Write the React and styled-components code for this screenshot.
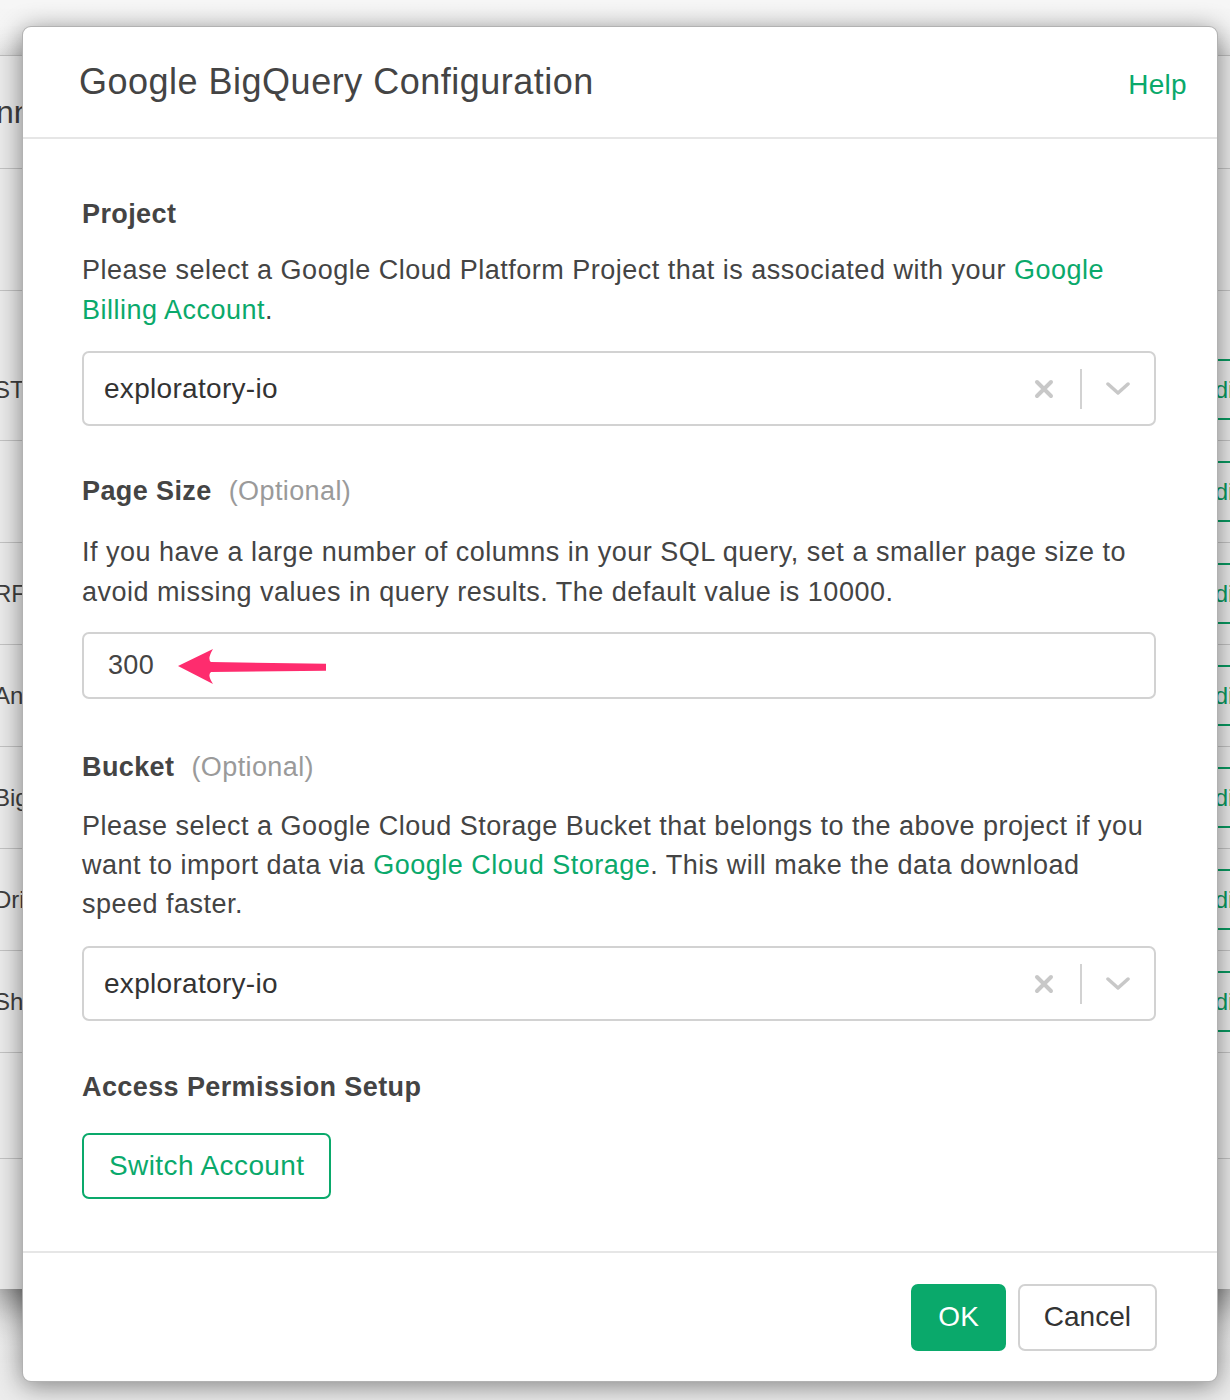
import styled, { createGlobalStyle } from "styled-components";

const GlobalStyle = createGlobalStyle`
  html, body {
    margin: 0;
    padding: 0;
  }
  body {
    background: #f4f4f4;
    font-family: "Liberation Sans", Arial, sans-serif;
    color: #444;
  }
`;

const GREEN = "#0aa96b";

// Stage
const Stage = styled.div`
  position: relative;
  width: 1230px;
  height: 1400px;
  overflow: hidden;
  background: linear-gradient(#f6f6f6, #ececec);
`;

// Window behind the modal
const BackWindow = styled.div`
  position: relative;
  margin-top: 55px;
  height: 1233px;
  background: #fff;
  border-top: 1px solid #bdbdbd;
  box-shadow: 0 14px 40px rgba(0, 0, 0, 0.65);
  overflow: hidden;
  display: flex;
  flex-direction: column;

  &::after {
    content: "";
    position: absolute;
    inset: 0;
    background: rgba(0, 0, 0, 0.08);
  }
`;

const BackRow = styled.div`
  flex: 0 0 ${(p) => p.$h}px;
  display: flex;
  align-items: center;
  border-bottom: ${(p) => (p.$line ? "1px solid #d4d4d4" : "none")};
  box-sizing: border-box;
`;

const BackLabel = styled.span`
  flex: 1;
  margin-left: ${(p) => (p.$big ? -4 : -6)}px;
  font-size: ${(p) => (p.$big ? 32 : 24)}px;
  color: #444;
  white-space: nowrap;
`;

const EditButton = styled.span`
  flex: 0 0 auto;
  margin-right: -32px;
  height: 57px;
  padding: 0 20px;
  display: flex;
  align-items: center;
  border: 2px solid ${GREEN};
  border-radius: 6px;
  color: ${GREEN};
  font-size: 24px;
`;

// Modal
const Modal = styled.div`
  position: absolute;
  left: 22px;
  top: 26px;
  width: 1196px;
  height: 1356px;
  box-sizing: border-box;
  background: #fff;
  border: 1px solid rgba(0, 0, 0, 0.3);
  border-radius: 9px;
  box-shadow: 0 4px 26px rgba(0, 0, 0, 0.45);
  display: flex;
  flex-direction: column;
`;

const Header = styled.div`
  height: 112px;
  flex: 0 0 112px;
  box-sizing: border-box;
  display: flex;
  align-items: center;
  justify-content: space-between;
  padding: 0 30px 0 56px;
  border-bottom: 2px solid #e6e6e6;
`;

const Title = styled.h1`
  margin: 0;
  font-size: 36px;
  letter-spacing: 0.5px;
  font-weight: normal;
  color: #444;
`;

const HelpLink = styled.a`
  font-size: 28px;
  letter-spacing: 0.3px;
  color: ${GREEN};
  text-decoration: none;
  margin-top: 6px;
`;

const Body = styled.div`
  flex: 1;
  padding: 55px 61px 0 59px;
  border-bottom: 2px solid #e6e6e6;
`;

const Section = styled.div`
  margin-bottom: ${(p) => p.$gap || 0}px;
`;

const Label = styled.div`
  font-size: 27px;
  letter-spacing: 0.4px;
  line-height: 40px;
  font-weight: bold;
  color: #444;
  margin-bottom: ${(p) => p.$mb}px;
`;

const Optional = styled.span`
  font-weight: normal;
  color: #9a9a9a;
  margin-left: 17px;
`;

const Desc = styled.p`
  margin: 0 0 ${(p) => p.$mb}px;
  font-size: 27px;
  letter-spacing: 0.5px;
  line-height: ${(p) => p.$lh || 40}px;
  color: #444;
`;

const Link = styled.a`
  color: ${GREEN};
  text-decoration: none;
`;

const SelectBox = styled.div`
  height: 75px;
  box-sizing: border-box;
  border: 2px solid #d2d2d2;
  border-radius: 7px;
  display: flex;
  align-items: center;
  padding-left: 20px;
`;

const SelectValue = styled.span`
  flex: 1;
  font-size: 28px;
  letter-spacing: 0.3px;
  color: #333;
`;

const ClearIcon = styled.span`
  width: 72px;
  display: flex;
  justify-content: center;
`;

const Separator = styled.span`
  width: 2px;
  height: 40px;
  background: #d2d2d2;
`;

const ChevronIcon = styled.span`
  width: 72px;
  display: flex;
  justify-content: center;
`;

const InputWrap = styled.div`
  position: relative;
`;

const TextInput = styled.div`
  height: 67px;
  box-sizing: border-box;
  border: 2px solid #d2d2d2;
  border-radius: 7px;
  display: flex;
  align-items: center;
  padding-left: 24px;
  font-size: 27px;
  letter-spacing: 0.3px;
  color: #444;
`;

const Arrow = styled.svg`
  position: absolute;
  left: 94px;
  top: 14px;
`;

const OutlineButton = styled.button`
  height: 66px;
  box-sizing: border-box;
  padding: 0 25px;
  border: 2px solid ${GREEN};
  border-radius: 7px;
  background: #fff;
  color: ${GREEN};
  font-family: inherit;
  font-size: 28px;
  letter-spacing: 0.4px;
`;

const Footer = styled.div`
  flex: 0 0 128px;
  box-sizing: border-box;
  display: flex;
  align-items: center;
  justify-content: flex-end;
  gap: 12px;
  padding: 0 60px 0 0;
`;

const FooterButton = styled.button`
  height: 67px;
  box-sizing: border-box;
  padding: 0 ${(p) => (p.$primary ? 25 : 24)}px;
  border-radius: 7px;
  border: 2px solid ${(p) => (p.$primary ? GREEN : "#d2d2d2")};
  background: ${(p) => (p.$primary ? GREEN : "#fff")};
  color: ${(p) => (p.$primary ? "#fff" : "#333")};
  font-family: inherit;
  font-size: 28px;
`;

const Select = ({ value }) => (
  <SelectBox>
    <SelectValue>{value}</SelectValue>
    <ClearIcon>
      <svg width="20" height="20" viewBox="0 0 20 20">
        <path d="M3 3 L17 17 M17 3 L3 17" stroke="#c8c8c8" strokeWidth="4" strokeLinecap="round" />
      </svg>
    </ClearIcon>
    <Separator />
    <ChevronIcon>
      <svg width="24" height="14" viewBox="0 0 24 14">
        <path d="M2 2 L12 11 L22 2" stroke="#c8c8c8" strokeWidth="3.5" fill="none" strokeLinecap="round" strokeLinejoin="round" />
      </svg>
    </ChevronIcon>
  </SelectBox>
);

const backRows = [
  { h: 113, label: "nnections", big: true, line: true },
  { h: 122, line: true },
  { h: 48 },
  { h: 102, label: "STAGING", edit: true, line: true },
  { h: 102, edit: true, line: true },
  { h: 102, label: "RFM", edit: true, line: true },
  { h: 102, label: "Analytics", edit: true, line: true },
  { h: 102, label: "BigQuery", edit: true, line: true },
  { h: 102, label: "Drive", edit: true, line: true },
  { h: 102, label: "Sheets", edit: true, line: true },
  { h: 106, line: true },
  { h: 130 },
];

const App = () => {
  return (
    <Stage>
      <GlobalStyle />
      <BackWindow>
        {backRows.map((r, i) => (
          <BackRow key={i} $h={r.h} $line={r.line}>
            <BackLabel $big={r.big}>{r.label}</BackLabel>
            {r.edit && <EditButton>Edit</EditButton>}
          </BackRow>
        ))}
      </BackWindow>

      <Modal>
        <Header>
          <Title>Google BigQuery Configuration</Title>
          <HelpLink>Help</HelpLink>
        </Header>

        <Body>
          <Section $gap={45}>
            <Label $mb={16}>Project</Label>
            <Desc $mb={21}>
              Please select a Google Cloud Platform Project that is associated with your{" "}
              <Link>Google Billing Account</Link>.
            </Desc>
            <Select value="exploratory-io" />
          </Section>

          <Section $gap={48}>
            <Label $mb={21}>
              Page Size<Optional>(Optional)</Optional>
            </Label>
            <Desc $mb={20}>
              If you have a large number of columns in your SQL query, set a smaller page size to
              avoid missing values in query results. The default value is 10000.
            </Desc>
            <InputWrap>
              <TextInput>300</TextInput>
              <Arrow width="150" height="40" viewBox="0 0 150 40">
                <path
                  d="M2 20 L37 3 Q31 13 35 16 L226 19 Q229 21 226 24 L35 26 Q31 29 37 38 Z"
                  fill="#fe2c6e"
                />
              </Arrow>
            </InputWrap>
          </Section>

          <Section $gap={46}>
            <Label $mb={20}>
              Bucket<Optional>(Optional)</Optional>
            </Label>
            <Desc $mb={22} $lh={39}>
              Please select a Google Cloud Storage Bucket that belongs to the above project if you
              want to import data via <Link>Google Cloud Storage</Link>. This will make the data
              download speed faster.
            </Desc>
            <Select value="exploratory-io" />
          </Section>

          <Section>
            <Label $mb={26}>Access Permission Setup</Label>
            <OutlineButton>Switch Account</OutlineButton>
          </Section>
        </Body>

        <Footer>
          <FooterButton $primary>OK</FooterButton>
          <FooterButton>Cancel</FooterButton>
        </Footer>
      </Modal>
    </Stage>
  );
};

export default App;
